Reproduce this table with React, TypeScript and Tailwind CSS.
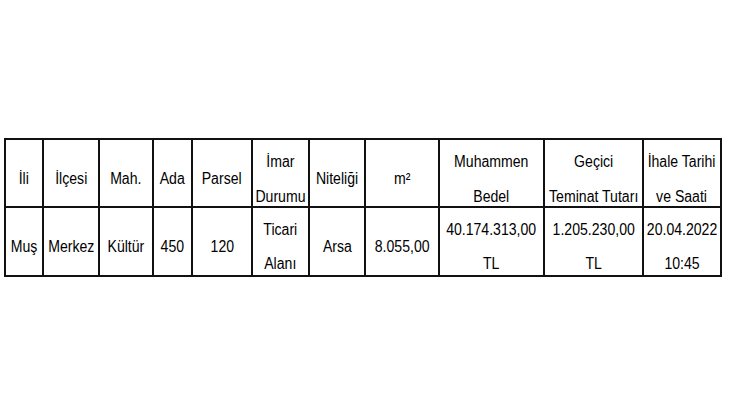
const cols = [36, 54, 52, 37, 58, 55, 54, 72, 103, 97, 76];

const header: string[][] = [
  ["İli"],
  ["İlçesi"],
  ["Mah."],
  ["Ada"],
  ["Parsel"],
  ["İmar", "Durumu"],
  ["Niteliği"],
  ["m²"],
  ["Muhammen", "Bedel"],
  ["Geçici", "Teminat Tutarı"],
  ["İhale Tarihi", "ve Saati"],
];

const row: string[][] = [
  ["Muş"],
  ["Merkez"],
  ["Kültür"],
  ["450"],
  ["120"],
  ["Ticari", "Alanı"],
  ["Arsa"],
  ["8.055,00"],
  ["40.174.313,00", "TL"],
  ["1.205.230,00", "TL"],
  ["20.04.2022", "10:45"],
];

function Cell({ lines, head }: { lines: string[]; head?: boolean }) {
  return (
    <div
      className={
        head
          ? "bg-white h-[66px] pt-[11px] flex flex-col items-center justify-center leading-[35px]"
          : "bg-white h-[67px] pt-[10px] flex flex-col items-center justify-center leading-[34px]"
      }
    >
      <div className="flex flex-col items-center scale-x-[0.88] origin-center">
        {lines.map((l) => (
          <div key={l} className="whitespace-nowrap">
            {l}
          </div>
        ))}
      </div>
    </div>
  );
}

export default function App() {
  return (
    <div className="w-[730px] h-[420px] bg-white pt-[138px] pl-[4px]">
      <div
        className="grid gap-[2px] p-[2px] bg-[#111] w-fit text-[16px] text-black"
        style={{
          gridTemplateColumns: cols.map((c) => c + "px").join(" "),
          fontFamily: '"Liberation Sans", Arial, sans-serif',
        }}
      >
        {header.map((h, i) => (
          <Cell key={"h" + i} lines={h} head />
        ))}
        {row.map((r, i) => (
          <Cell key={"r" + i} lines={r} />
        ))}
      </div>
    </div>
  );
}
